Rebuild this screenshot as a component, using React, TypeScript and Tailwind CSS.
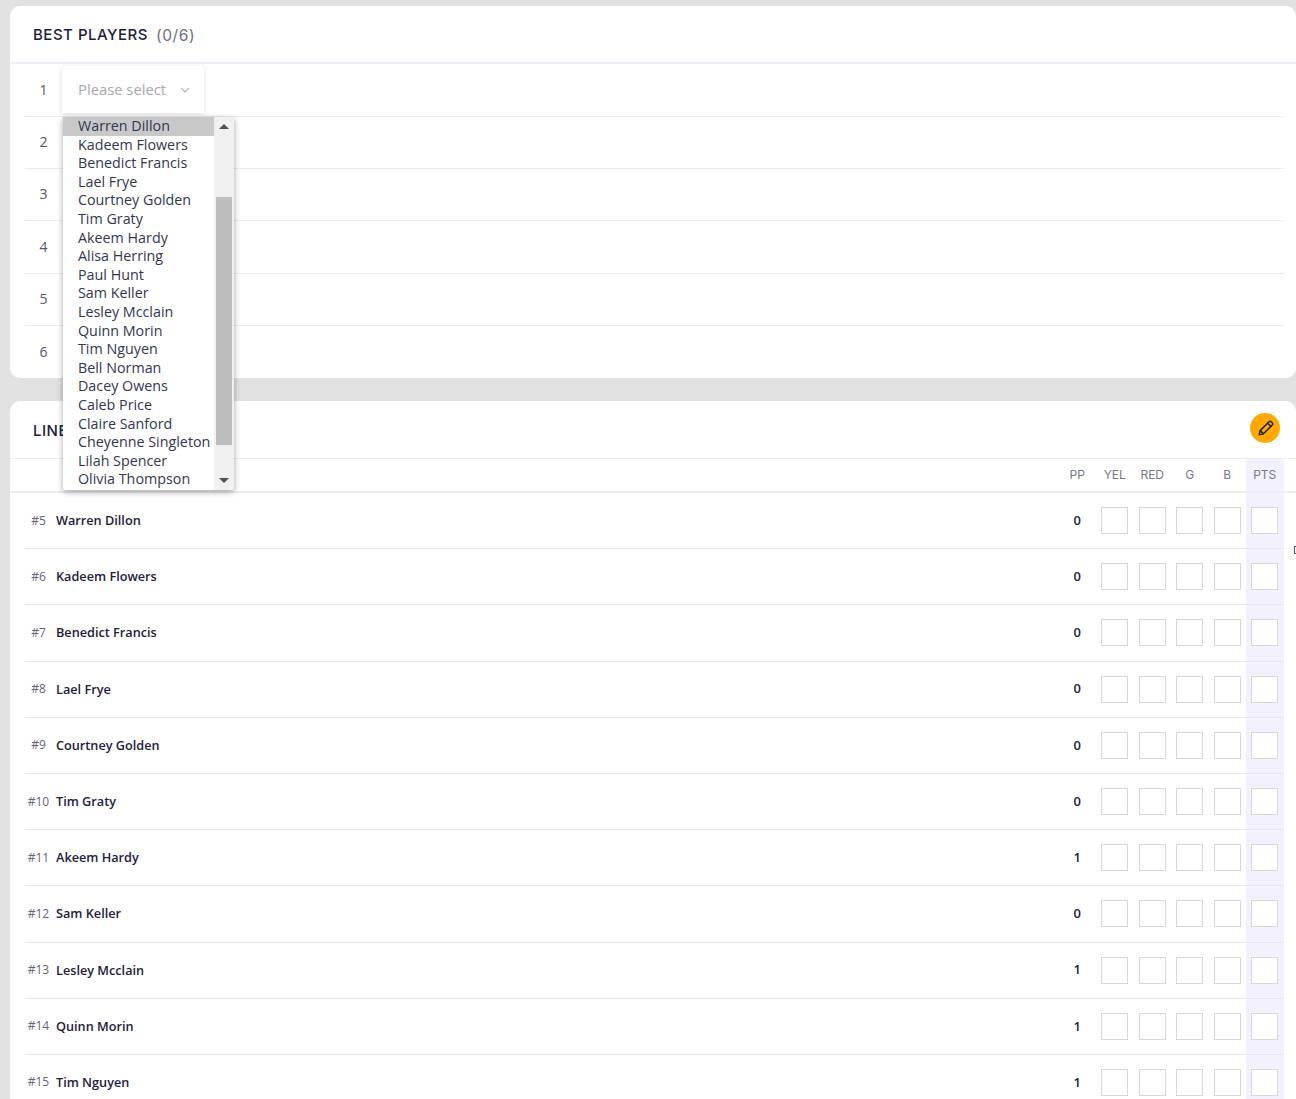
import React from "react";

const names = ["Warren Dillon","Kadeem Flowers","Benedict Francis","Lael Frye","Courtney Golden","Tim Graty","Akeem Hardy","Alisa Herring","Paul Hunt","Sam Keller","Lesley Mcclain","Quinn Morin","Tim Nguyen","Bell Norman","Dacey Owens","Caleb Price","Claire Sanford","Cheyenne Singleton","Lilah Spencer","Olivia Thompson"];
const players: [string,string,number][] = [["#5","Warren Dillon",0],["#6","Kadeem Flowers",0],["#7","Benedict Francis",0],["#8","Lael Frye",0],["#9","Courtney Golden",0],["#10","Tim Graty",0],["#11","Akeem Hardy",1],["#12","Sam Keller",0],["#13","Lesley Mcclain",1],["#14","Quinn Morin",1],["#15","Tim Nguyen",1]];
const rowH = [53,52,52,53,52,52];

function Cell({ pts }: { pts?: boolean }) {
  return (
    <div className={`w-[37.5px] self-stretch flex items-center justify-center ${pts ? "bg-[#f3f1fd]" : ""}`}>
      <div className="w-[27px] h-[27px] bg-white border border-[#d6d6dc]" />
    </div>
  );
}

export default function App() {
  return (
    <div className="relative w-[1296px] h-[1099px] overflow-hidden bg-[#e1e1e1] pl-[10px] pt-[6px] font-['Open_Sans',sans-serif] text-[#1e2039]">
      <section className="w-[1286px] h-[372px] bg-white rounded-[10px] pr-[12px]">
        <div className="-mr-[12px] h-[58px] border-b-2 border-[#eeeef6] flex items-center pl-[23px] pt-[3px] font-['Inter',sans-serif] text-[15px] font-medium tracking-[0.5px]">
          <span>BEST PLAYERS</span>
          <span className="ml-[8px] font-normal text-[#6e6f7d] text-[15.5px] tracking-[0.6px]">(0/6)</span>
        </div>
        <div className="pl-[15px]">
          {rowH.map((h, i) => (
            <div key={i} className={`flex items-center ${i < 5 ? "border-b border-[#ececf2]" : ""}`} style={{ height: h }}>
              <span className="w-[37px] -mt-[2px] text-center text-[14px] text-[#54556a]">{i + 1}</span>
              {i === 0 && (
                <div className="w-[142px] h-[47px] -mt-[1px] flex items-center justify-between pl-[16px] pr-[14px] bg-white shadow-[0_1px_5px_rgba(0,0,0,0.14)] text-[14.8px] text-[#a9a9ae]">
                  <span>Please select</span>
                  <svg width="10" height="6" viewBox="0 0 10 6" fill="none" stroke="#b5b5ba" strokeWidth="1.2"><path d="M1 1l4 4 4-4" /></svg>
                </div>
              )}
            </div>
          ))}
        </div>
      </section>

      <section className="w-[1286px] mt-[23px] bg-white rounded-t-[10px] pr-[12.5px]">
        <div className="-mr-[12.5px] h-[58px] border-b border-[#ececf2] flex items-center justify-between pl-[23px] pr-[16px] font-['Inter',sans-serif] text-[15px] font-medium tracking-[0.5px]">
          <span className="mt-[3px]">LINEUP</span>
          <span className="w-[30px] h-[30px] mb-[3px] rounded-full bg-[#ffa800] flex items-center justify-center">
            <svg width="17" height="17" viewBox="0 0 24 24" fill="none" stroke="#1e2039" strokeWidth="2" strokeLinejoin="round" strokeLinecap="round"><path d="M3 21l1.5-6L17 2.5a2 2 0 0 1 3 0l1.5 1.5a2 2 0 0 1 0 3L9 19.5 3 21z" /><path d="M15 4.5l4.5 4.5M4.5 15L9 19.5" /></svg>
          </span>
        </div>
        <div className="h-[34px] -mr-[12.5px] border-b-2 border-[#ececf2] pr-[12.5px] flex justify-end font-['Inter',sans-serif] text-[12px] text-[#77788a]">
          {["PP","YEL","RED","G","B","PTS"].map((c) => (
            <div key={c} className={`w-[37.5px] flex items-center justify-center ${c === "PTS" ? "bg-[#f3f1fd]" : ""}`}>{c}</div>
          ))}
        </div>
        <div className="pl-[15px]">
          {players.map(([num, name, pp]) => (
            <div key={num} className="h-[56.2px] border-b border-[#e6e6ee] flex items-center">
              <span className="w-[27px] text-center text-[12px] text-[#63647a] mr-[4px]">{num}</span>
              <span className="flex-1 text-[12.7px] font-semibold">{name}</span>
              <span className="w-[37.5px] text-center text-[13px] font-semibold">{pp}</span>
              <Cell /><Cell /><Cell /><Cell /><Cell pts />
            </div>
          ))}
        </div>
      </section>

      <div className="absolute left-[63px] top-[117px] w-[171px] h-[373px] bg-white rounded-b-[2px] shadow-[0_2px_6px_rgba(0,0,0,0.35)] flex text-[14.3px] leading-[18.6px] text-[#333650]">
        <div className="w-[151px] overflow-hidden">
          {names.map((n, i) => (
            <div key={n} className={`pl-[15px] whitespace-nowrap ${i === 0 ? "bg-[#c8c8c8]" : ""}`}>{n}</div>
          ))}
        </div>
        <div className="w-[20px] bg-[#f0f0f0] flex flex-col items-center justify-between relative py-[7px]">
          <svg width="10" height="5" viewBox="0 0 10 5"><path d="M5 0l5 5H0z" fill="#505050" /></svg>
          <div className="absolute left-[2px] top-[80px] w-[16px] h-[248px] bg-[#bdbdbd]" />
          <svg width="10" height="5" viewBox="0 0 10 5"><path d="M0 0h10L5 5z" fill="#505050" /></svg>
        </div>
      </div>

      <div className="absolute left-[1294px] top-[546px] w-[4px] h-[8px] border border-[#55555f]" />
    </div>
  );
}
